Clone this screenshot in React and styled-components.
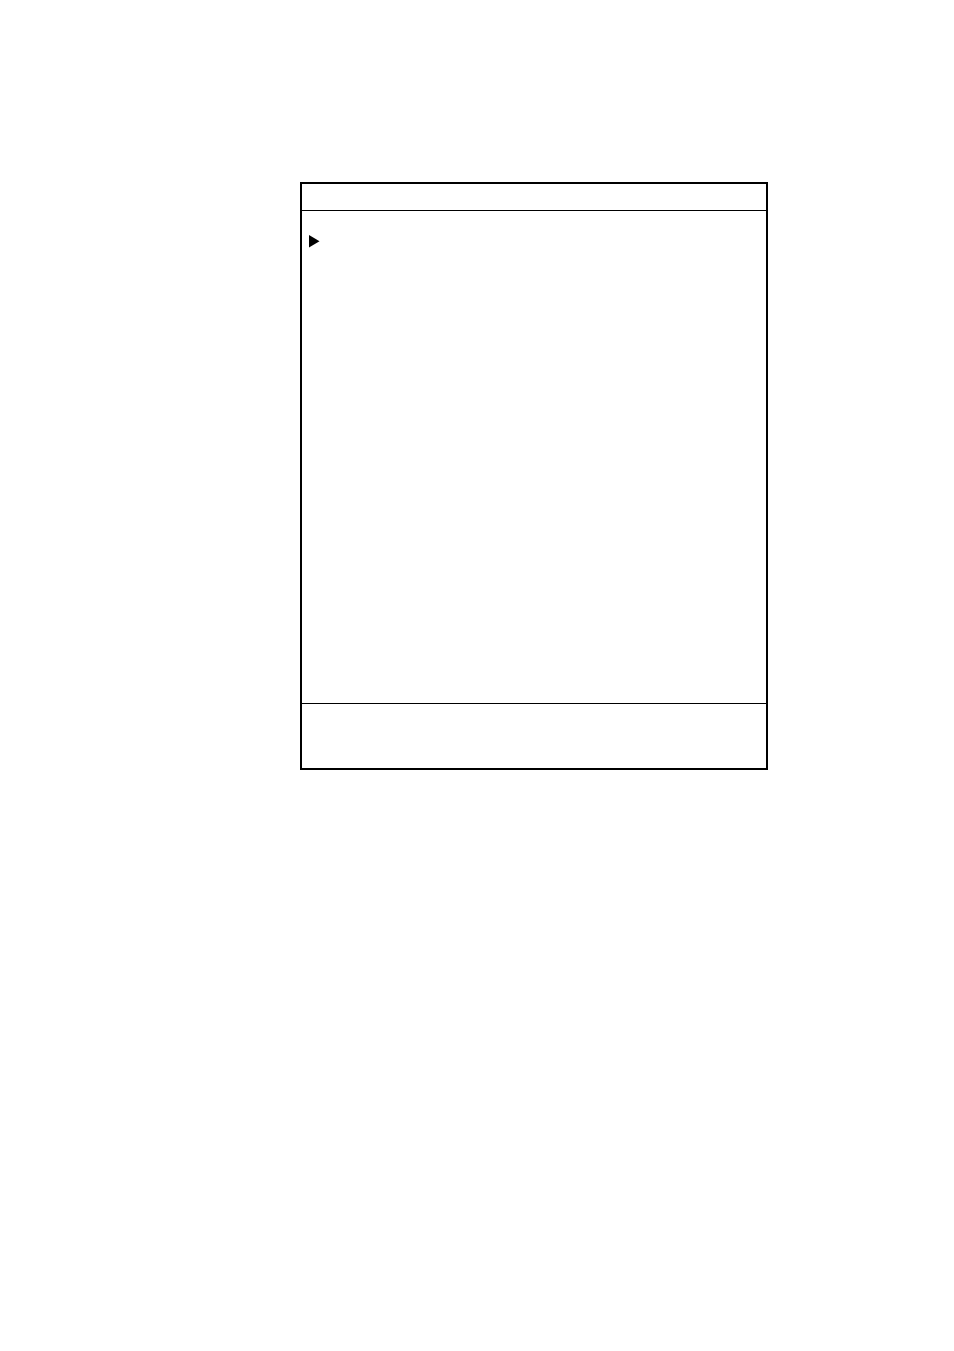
import React from 'react';
import styled, { createGlobalStyle } from 'styled-components';

const GlobalStyle = createGlobalStyle`
  * {
    box-sizing: border-box;
  }

  body {
    margin: 0;
    background: #fff;
    color: #000;
    font-family: 'Liberation Sans', Arial, sans-serif;
  }
`;

const Page = styled.main`
  min-height: 100vh;
  padding: 182px 186px 182px 300px;
`;

const Screen = styled.section`
  display: flex;
  flex-direction: column;
  border: 2px solid #000;
`;

const TitleBar = styled.header`
  min-height: 27px;
  border-bottom: 1px solid #000;
`;

const MenuArea = styled.div`
  min-height: 492px;
  padding: 24px 7px;
`;

const HelpBar = styled.footer`
  min-height: 65px;
  border-top: 1px solid #000;
`;

const Cursor = styled.svg`
  display: block;
  width: 11px;
  height: 13px;
`;

const App = () => (
  <>
    <GlobalStyle />
    <Page>
      <Screen>
        <TitleBar />
        <MenuArea>
          <Cursor viewBox="0 0 11 13" aria-hidden="true">
            <path d="M0 0 L10.5 6.25 L0 12.5 Z" fill="#000" />
          </Cursor>
        </MenuArea>
        <HelpBar />
      </Screen>
    </Page>
  </>
);

export default App;
